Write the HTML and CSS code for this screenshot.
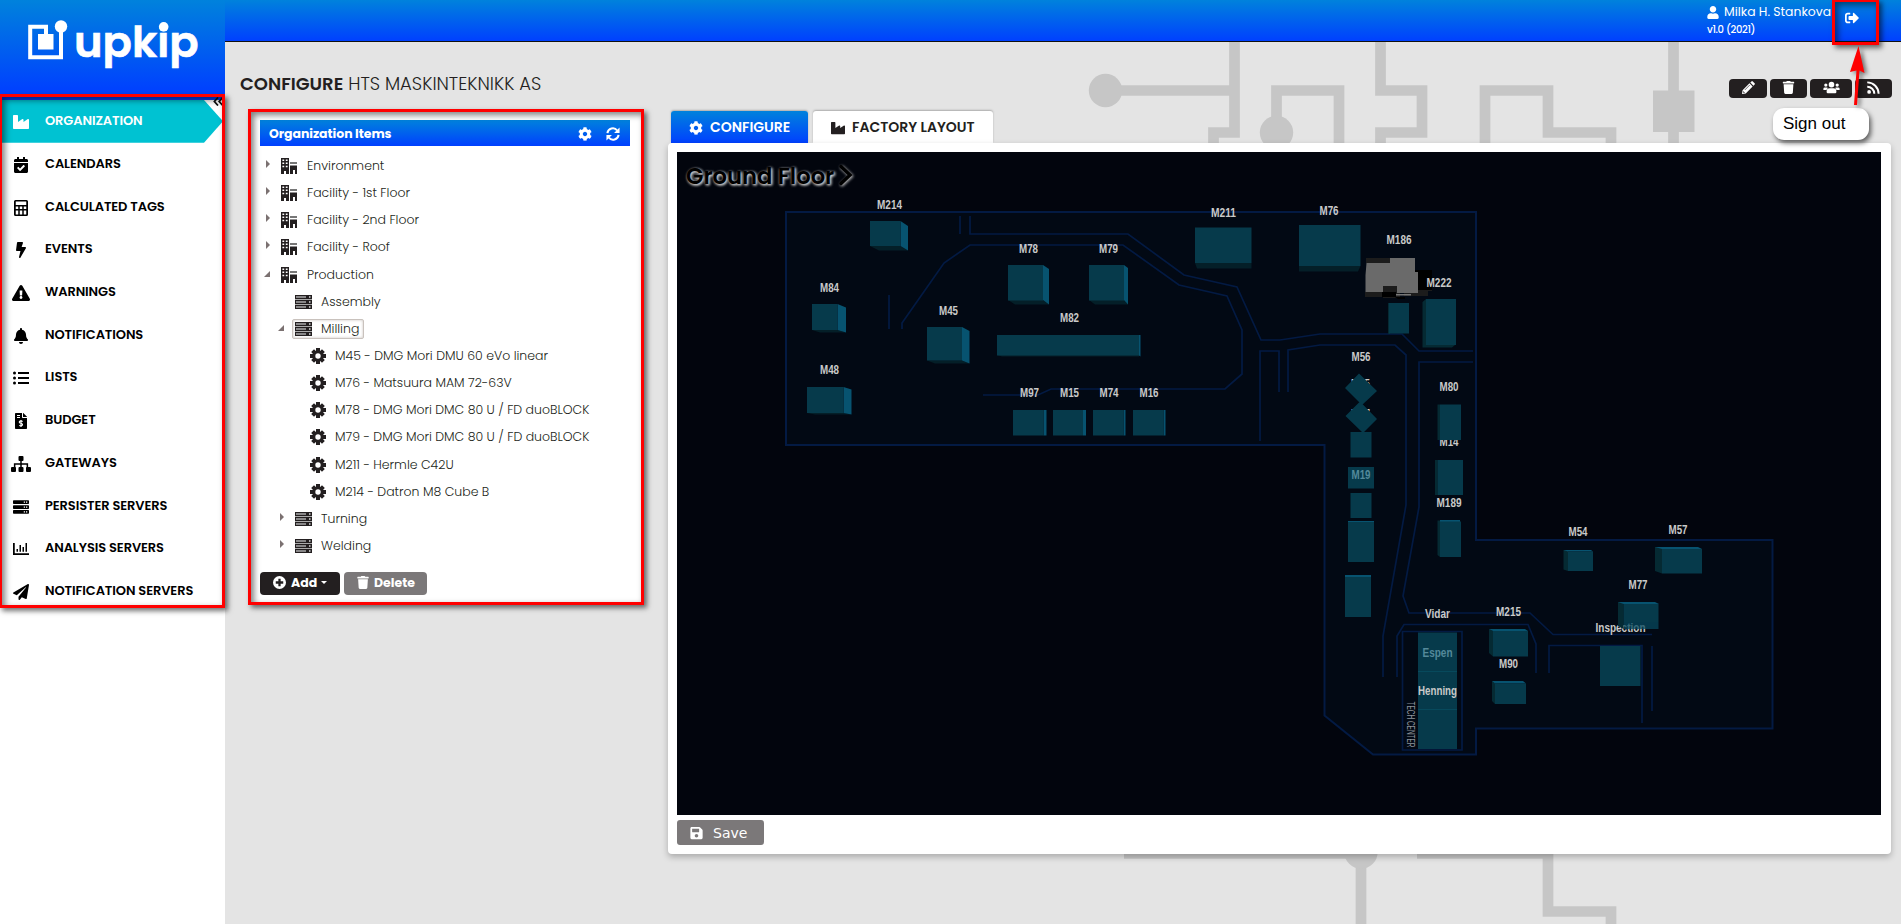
FILE: index.html
```html
<!DOCTYPE html>
<html lang="en">
<head>
<meta charset="utf-8">
<title>upkip - Configure</title>
<link rel="stylesheet" href="styles.css">
</head>
<body>
<svg class="sprite" aria-hidden="true">
  <symbol id="industry" viewBox="0 0 512 512"><path d="M475.115 163.781L336 252.309v-68.28c0-18.916-20.931-30.399-36.885-20.248L160 252.309V56c0-13.255-10.745-24-24-24H24C10.745 32 0 42.745 0 56v400c0 13.255 10.745 24 24 24h464c13.255 0 24-10.745 24-24V184.029c0-18.917-20.931-30.399-36.885-20.248z"/></symbol>
  <symbol id="calendar" viewBox="0 0 448 512"><path d="M436 160H12c-6.627 0-12-5.373-12-12v-36c0-26.51 21.49-48 48-48h48V12c0-6.627 5.373-12 12-12h40c6.627 0 12 5.373 12 12v52h128V12c0-6.627 5.373-12 12-12h40c6.627 0 12 5.373 12 12v52h48c26.51 0 48 21.49 48 48v36c0 6.627-5.373 12-12 12zM12 192h424c6.627 0 12 5.373 12 12v260c0 26.51-21.49 48-48 48H48c-26.51 0-48-21.49-48-48V204c0-6.627 5.373-12 12-12zm333.296 95.947l-28.169-28.398c-4.667-4.705-12.265-4.736-16.97-.068L194.12 364.665l-45.98-46.352c-4.667-4.705-12.266-4.736-16.971-.068l-28.397 28.17c-4.705 4.667-4.736 12.265-.068 16.97l82.601 83.269c4.667 4.705 12.265 4.736 16.97.068l142.953-141.805c4.705-4.667 4.736-12.265.068-16.97z"/></symbol>
  <symbol id="calculator" viewBox="0 0 448 512"><path fill-rule="evenodd" d="M48 0H400Q448 0 448 48V464Q448 512 400 512H48Q0 512 0 464V48Q0 0 48 0ZM56 48V160H392V48ZM56 208V288H136V208ZM184 208V288H264V208ZM312 208V288H392V208ZM56 336V464H136V336ZM184 336V464H264V336ZM312 336V464H392V336Z"/></symbol>
  <symbol id="bolt" viewBox="0 0 320 512"><path d="M296 160H180.6l42.6-129.8C227.2 15 215.7 0 200 0H56C44 0 33.8 8.9 32.2 20.8l-32 240C-1.7 275.2 9.5 288 24 288h118.7L96.6 482.5c-3.6 15.2 8 29.5 23.3 29.5 8.4 0 16.4-4.4 20.8-12l176-304c9.3-15.9-2.2-36-20.7-36z"/></symbol>
  <symbol id="warning" viewBox="0 0 576 512"><path d="M569.517 440.013C587.975 472.007 564.806 512 527.94 512H48.054c-36.937 0-59.999-40.055-41.577-71.987L246.423 23.985c18.467-32.009 64.72-31.951 83.154 0l239.94 416.028zM288 354c-25.405 0-46 20.595-46 46s20.595 46 46 46 46-20.595 46-46-20.595-46-46-46zm-43.673-165.346l7.418 136c.347 6.364 5.609 11.346 11.982 11.346h48.546c6.373 0 11.635-4.982 11.982-11.346l7.418-136c.375-6.874-5.098-12.654-11.982-12.654h-63.383c-6.884 0-12.356 5.78-11.981 12.654z"/></symbol>
  <symbol id="bell" viewBox="0 0 448 512"><path d="M224 512c35.32 0 63.97-28.65 63.97-64H160.03c0 35.35 28.65 64 63.97 64zm215.39-149.71c-19.32-20.76-55.47-51.99-55.47-154.29 0-77.7-54.48-139.9-127.94-155.16V32c0-17.67-14.32-32-31.98-32s-31.98 14.33-31.98 32v20.84C118.56 68.1 64.08 130.3 64.08 208c0 102.3-36.15 133.53-55.47 154.29-6 6.45-8.66 14.16-8.61 21.71.11 16.4 12.98 32 32.1 32h383.8c19.12 0 32-15.6 32.1-32 .05-7.55-2.61-15.27-8.61-21.71z"/></symbol>
  <symbol id="list" viewBox="0 0 512 512"><circle cx="48" cy="96" r="48"/><circle cx="48" cy="256" r="48"/><circle cx="48" cy="416" r="48"/><path d="M160 64H512V128H160ZM160 224H512V288H160ZM160 384H512V448H160Z"/></symbol>
  <symbol id="budget" viewBox="0 0 384 512"><path fill-rule="evenodd" d="M24 0H224V136Q224 160 248 160H384V488Q384 512 360 512H24Q0 512 0 488V24Q0 0 24 0ZM64 64V96H160V64ZM64 128V160H160V128Z"/><path d="M256 0H264L384 122V128H256Z"/><path d="M244 270Q192 240 152 262Q120 300 160 320L220 340Q260 372 224 402Q180 425 136 396M192 220V450" fill="none" stroke="#fff" stroke-width="36"/></symbol>
  <symbol id="sitemap" viewBox="0 0 640 512"><path d="M272 0H368Q400 0 400 32V128Q400 160 368 160H344V232H548V352H608Q640 352 640 384V480Q640 512 608 512H512Q480 512 480 480V384Q480 352 500 352V280H344V352H368Q400 352 400 384V480Q400 512 368 512H272Q240 512 240 480V384Q240 352 272 352H296V280H140V352Q160 352 160 384V480Q160 512 128 512H32Q0 512 0 480V384Q0 352 32 352H92V232H296V160H272Q240 160 240 128V32Q240 0 272 0Z"/></symbol>
  <symbol id="server" viewBox="0 0 512 512"><path fill-rule="evenodd" d="M24 40H488Q512 40 512 64V136Q512 160 488 160H24Q0 160 0 136V64Q0 40 24 40ZM344 80V120H384V80ZM416 80V120H456V80ZM24 196H488Q512 196 512 220V292Q512 316 488 316H24Q0 316 0 292V220Q0 196 24 196ZM344 236V276H384V236ZM416 236V276H456V236ZM24 352H488Q512 352 512 376V448Q512 472 488 472H24Q0 472 0 448V376Q0 352 24 352ZM344 392V432H384V392ZM416 392V432H456V392Z"/></symbol>
  <symbol id="chart" viewBox="0 0 512 512"><path d="M0 64H56V392H512V448H0ZM112 256H160V344H112ZM208 128H256V344H208ZM304 192H352V344H304ZM400 64H448V344H400Z"/></symbol>
  <symbol id="plane" viewBox="0 0 512 512"><path d="M476 3.2L12.5 270.6c-18.1 10.4-15.8 35.6 2.2 43.2L121 358.4l287.3-253.2c5.5-4.9 13.3 2.6 8.6 8.3L176 407v80.5c0 23.6 28.5 32.9 42.5 15.8L282 426l124.6 52.2c14.2 6 30.4-2.9 33-18.2l72-432C515 7.8 493.3-6.8 476 3.2z"/></symbol>
  <symbol id="cog" viewBox="0 0 512 512"><path d="M487.4 315.7l-42.6-24.6c4.3-23.2 4.3-47 0-70.2l42.6-24.6c4.9-2.8 7.1-8.6 5.5-14-11.1-35.6-30-67.8-54.7-94.6-3.8-4.1-10-5.1-14.8-2.3L380.8 110c-17.9-15.4-38.5-27.3-60.8-35.1V25.8c0-5.6-3.9-10.5-9.4-11.7-36.7-8.2-74.3-7.8-109.2 0-5.5 1.2-9.4 6.1-9.4 11.7V75c-22.2 7.9-42.8 19.8-60.8 35.1L88.7 85.5c-4.9-2.8-11-1.9-14.8 2.3-24.7 26.7-43.6 58.9-54.7 94.6-1.7 5.4.6 11.2 5.5 14L67.3 221c-4.3 23.2-4.3 47 0 70.2l-42.6 24.6c-4.9 2.8-7.1 8.6-5.5 14 11.1 35.6 30 67.8 54.7 94.6 3.8 4.1 10 5.1 14.8 2.3l42.6-24.6c17.9 15.4 38.5 27.3 60.8 35.1v49.2c0 5.6 3.9 10.5 9.4 11.7 36.7 8.2 74.3 7.8 109.2 0 5.5-1.2 9.4-6.1 9.4-11.7v-49.2c22.2-7.9 42.8-19.8 60.8-35.1l42.6 24.6c4.9 2.8 11 1.9 14.8-2.3 24.7-26.7 43.6-58.9 54.7-94.6 1.5-5.5-.7-11.3-5.6-14.1zM256 336c-44.1 0-80-35.9-80-80s35.9-80 80-80 80 35.9 80 80-35.9 80-80 80z"/></symbol>
  <symbol id="gear" viewBox="0 0 16 16"><g stroke="currentColor" stroke-width="4"><path d="M8 0V16M0 8H16M2.6 2.6L13.4 13.4M13.4 2.6L2.6 13.4"/></g><circle cx="8" cy="8" r="5.8"/><circle cx="8" cy="8" r="2.7" fill="#fff"/></symbol>
  <symbol id="sync" viewBox="0 0 16 16"><g fill="none" stroke="currentColor" stroke-width="2.3"><path d="M1.600 7A6.300 6.300 0 0 1 12.800 4M14.400 9A6.300 6.300 0 0 1 3.200 12"/></g><path d="M15.500 .5V6.800H9.200ZM.5 15.500V9.200H6.800Z"/></symbol>
  <symbol id="user" viewBox="0 0 448 512"><path d="M224 256c70.7 0 128-57.3 128-128S294.7 0 224 0 96 57.3 96 128s57.3 128 128 128zm89.6 32h-16.7c-22.2 10.2-46.9 16-72.9 16s-50.6-5.8-72.9-16h-16.7C60.2 288 0 348.2 0 422.4V464c0 26.5 21.5 48 48 48h352c26.5 0 48-21.5 48-48v-41.6c0-74.2-60.2-134.4-134.4-134.4z"/></symbol>
  <symbol id="signout" viewBox="0 0 512 512"><path d="M497 273L329 441c-15 15-41 4.5-41-17v-96H152c-13.3 0-24-10.7-24-24v-96c0-13.3 10.7-24 24-24h136V88c0-21.4 25.9-32 41-17l168 168c9.3 9.4 9.3 24.6 0 34zM192 436v-40c0-6.6-5.4-12-12-12H96c-17.7 0-32-14.3-32-32V160c0-17.7 14.3-32 32-32h84c6.6 0 12-5.4 12-12V76c0-6.6-5.4-12-12-12H96c-53 0-96 43-96 96v192c0 53 43 96 96 96h84c6.6 0 12-5.4 12-12z"/></symbol>
  <symbol id="pencil" viewBox="0 0 16 16"><path d="M9.2 2.9L13.1 6.8 4.6 15.3.4 16 0 15.6.7 11.4ZM10.2 1.9L11.6.5Q12.4-.2 13.3.5L15.5 2.7Q16.3 3.6 15.5 4.4L14.1 5.8Z"/><path d="M3.5 11L9.6 4.9M1.8 12.6V14.2H3.4" fill="none" stroke="#231f20" stroke-width=".8"/></symbol>
  <symbol id="trash" viewBox="0 0 448 512"><path d="M432 32H312l-9.4-18.7A24 24 0 0 0 281.1 0H166.8a23.72 23.72 0 0 0-21.4 13.3L136 32H16A16 16 0 0 0 0 48v32a16 16 0 0 0 16 16h416a16 16 0 0 0 16-16V48a16 16 0 0 0-16-16zM53.2 467a48 48 0 0 0 47.9 45h245.8a48 48 0 0 0 47.9-45L416 128H32z"/></symbol>
  <symbol id="users" viewBox="0 0 640 512"><circle cx="96" cy="160" r="64"/><circle cx="544" cy="160" r="64"/><circle cx="320" cy="144" r="110"/><path d="M0 352V304Q0 256 60 256H130Q165 256 185 280Q130 310 128 352ZM640 352V304Q640 256 580 256H510Q475 256 455 280Q510 310 512 352ZM128 432V404Q128 288 244 288H396Q512 288 512 404V432Q512 480 464 480H176Q128 480 128 432Z"/></symbol>
  <symbol id="rss" viewBox="0 0 16 16"><circle cx="2.6" cy="13.4" r="2.3"/><path d="M.3 7A8.7 8.7 0 0 1 9 15.7M.3 1.7A14 14 0 0 1 14.3 15.7" fill="none" stroke="currentColor" stroke-width="2.4"/></symbol>
  <symbol id="save" viewBox="0 0 448 512"><path d="M433.941 129.941l-83.882-83.882A48 48 0 0 0 316.118 32H48C21.49 32 0 53.49 0 80v352c0 26.51 21.49 48 48 48h352c26.51 0 48-21.49 48-48V163.882a48 48 0 0 0-14.059-33.941zM224 416c-35.346 0-64-28.654-64-64 0-35.346 28.654-64 64-64s64 28.654 64 64c0 35.346-28.654 64-64 64zm96-304.52V212c0 6.627-5.373 12-12 12H76c-6.627 0-12-5.373-12-12V108c0-6.627 5.373-12 12-12h228.52c3.183 0 6.235 1.264 8.485 3.515l3.48 3.48A11.996 11.996 0 0 1 320 111.48z"/></symbol>
  <symbol id="plus" viewBox="0 0 16 16"><path fill-rule="evenodd" d="M8 0A8 8 0 1 1 8 16A8 8 0 1 1 8 0ZM6.6 3.4V6.6H3.4V9.4H6.6V12.6H9.4V9.4H12.6V6.6H9.4V3.4Z"/></symbol>
  <symbol id="building" viewBox="0 0 16 16"><path fill-rule="evenodd" d="M0 0H8V16H5V13H3V16H0ZM1.4 1.5V3H3.2V1.5ZM4.8 1.5V3H6.6V1.5ZM1.4 4.6V6.1H3.2V4.6ZM4.8 4.6V6.1H6.6V4.6ZM1.4 7.7V9.2H3.2V7.7ZM4.8 7.7V9.2H6.6V7.7ZM9 7.5H16V16H14V12H12V16H9Z"/><path d="M9 4H16V6H9Z" fill="#777"/></symbol>
  <symbol id="rack" viewBox="0 0 17 14"><path d="M0 0H17V4H0ZM0 5H17V9H0ZM0 10H17V14H0Z"/><path d="M1 1.2H11V2.8H1ZM1 6.2H11V7.8H1ZM1 11.2H11V12.8H1Z" fill="#aaa"/><path d="M0 4H17V5H0ZM0 9H17V10H0Z" fill="#aaa"/><path d="M14 1.3H15.5V2.7H14ZM14 6.3H15.5V7.7H14ZM14 11.3H15.5V12.7H14Z" fill="#ddd"/></symbol>
</svg>

<div class="app">
  <aside class="sidebar">
    <div class="brand">
      <svg class="logo" viewBox="0 0 225 94">
        <path d="M61 30V57.2H30.2V26.8H46V36" fill="none" stroke="#fff" stroke-width="4"/>
        <path d="M38 34H53.5V49.5H38Z" fill="#fff"/><circle cx="61" cy="26.5" r="6.2" fill="#fff"/>
        <text class="wordmark" x="74" y="57" textLength="124.5" lengthAdjust="spacingAndGlyphs">upkip</text>
        <circle cx="163.7" cy="26.8" r="4.8" fill="#fff"/>
      </svg>
    </div>
    <nav class="nav">
      <a class="nav-item active"><span class="nav-icon"><svg><use href="#industry"/></svg></span><span>ORGANIZATION</span></a>
      <a class="nav-item"><span class="nav-icon"><svg><use href="#calendar"/></svg></span><span>CALENDARS</span></a>
      <a class="nav-item"><span class="nav-icon"><svg><use href="#calculator"/></svg></span><span>CALCULATED TAGS</span></a>
      <a class="nav-item"><span class="nav-icon"><svg><use href="#bolt"/></svg></span><span>EVENTS</span></a>
      <a class="nav-item"><span class="nav-icon"><svg><use href="#warning"/></svg></span><span>WARNINGS</span></a>
      <a class="nav-item"><span class="nav-icon"><svg><use href="#bell"/></svg></span><span>NOTIFICATIONS</span></a>
      <a class="nav-item"><span class="nav-icon"><svg><use href="#list"/></svg></span><span>LISTS</span></a>
      <a class="nav-item"><span class="nav-icon"><svg><use href="#budget"/></svg></span><span>BUDGET</span></a>
      <a class="nav-item"><span class="nav-icon"><svg><use href="#sitemap"/></svg></span><span>GATEWAYS</span></a>
      <a class="nav-item"><span class="nav-icon"><svg><use href="#server"/></svg></span><span>PERSISTER SERVERS</span></a>
      <a class="nav-item"><span class="nav-icon"><svg><use href="#chart"/></svg></span><span>ANALYSIS SERVERS</span></a>
      <a class="nav-item"><span class="nav-icon"><svg><use href="#plane"/></svg></span><span>NOTIFICATION SERVERS</span></a>
    </nav>
    <svg class="collapse" viewBox="0 0 11 9"><path d="M5 .5L1.4 4.5 5 8.5M9.8 .5L6.2 4.5 9.8 8.5" fill="none" stroke="#111" stroke-width="1.8"/></svg>
  </aside>

  <main class="main">
    <svg class="circuit" viewBox="225 0 1676 924">
      <g fill="none" stroke="#c6c6c6" stroke-width="10.7">
        <path d="M1105 90.5H1234.5M1234.5 41V132.5H1213.5V160M1276.5 132V90.5H1339V160M1380.5 41V90.5H1422V132.5H1380.5V160M1485 160V90.5H1548V132.5H1611V160M1673.5 41V160"/>
        <path d="M1124 853.5H1361M1361 850V924M1417 853.5H1548V911.5H1611V924"/>
      </g>
      <g fill="#c6c6c6"><circle cx="1105.5" cy="90.5" r="16.7"/><circle cx="1276.5" cy="132.5" r="16.7"/><circle cx="1361" cy="852" r="16.7"/><path d="M1653 90.5H1694.5V132H1653Z"/></g>
    </svg>
    <header class="topbar">
      <div class="account">
        <div class="account-name"><svg><use href="#user"/></svg><span>Milka H. Stankova</span></div>
        <div class="version">v1.0 (2021)</div>
      </div>
      <svg class="signout-icon"><use href="#signout"/></svg>
    </header>
    <div class="title-row">
      <h1 class="title"><b>CONFIGURE</b> <span>HTS MASKINTEKNIKK AS</span></h1>
      <div class="tools">
        <button class="tool t1"><svg><use href="#pencil"/></svg></button>
        <button class="tool t2"><svg><use href="#trash"/></svg></button>
        <button class="tool t3"><svg><use href="#users"/></svg></button>
        <button class="tool t4"><svg><use href="#rss"/></svg></button>
      </div>
    </div>
    <div class="columns">
      <section class="tree-card">
        <div class="tree-head"><span>Organization Items</span><svg><use href="#cog"/></svg><svg><use href="#sync"/></svg></div>
        <ul class="tree">
          <li class="node"><i class="closed"></i><svg><use href="#building"/></svg><span>Environment</span></li>
          <li class="node"><i class="closed"></i><svg><use href="#building"/></svg><span>Facility - 1st Floor</span></li>
          <li class="node"><i class="closed"></i><svg><use href="#building"/></svg><span>Facility - 2nd Floor</span></li>
          <li class="node"><i class="closed"></i><svg><use href="#building"/></svg><span>Facility - Roof</span></li>
          <li class="node"><i class="open"></i><svg><use href="#building"/></svg><span>Production</span></li>
          <li class="node sub"><i></i><svg class="rack"><use href="#rack"/></svg><span>Assembly</span></li>
          <li class="node sub"><i class="open"></i><div class="selected"><svg class="rack"><use href="#rack"/></svg><span>Milling</span></div></li>
          <li class="node leaf"><svg><use href="#gear"/></svg><span>M45 - DMG Mori DMU 60 eVo linear</span></li>
          <li class="node leaf"><svg><use href="#gear"/></svg><span>M76 - Matsuura MAM 72-63V</span></li>
          <li class="node leaf"><svg><use href="#gear"/></svg><span>M78 - DMG Mori DMC 80 U / FD duoBLOCK</span></li>
          <li class="node leaf"><svg><use href="#gear"/></svg><span>M79 - DMG Mori DMC 80 U / FD duoBLOCK</span></li>
          <li class="node leaf"><svg><use href="#gear"/></svg><span>M211 - Hermle C42U</span></li>
          <li class="node leaf"><svg><use href="#gear"/></svg><span>M214 - Datron M8 Cube B</span></li>
          <li class="node sub"><i class="closed"></i><svg class="rack"><use href="#rack"/></svg><span>Turning</span></li>
          <li class="node sub"><i class="closed"></i><svg class="rack"><use href="#rack"/></svg><span>Welding</span></li>
        </ul>
        <div class="tree-actions">
          <button class="btn add"><svg><use href="#plus"/></svg><span>Add</span><i class="caret"></i></button>
          <button class="btn delete"><svg><use href="#trash"/></svg><span>Delete</span></button>
        </div>
      </section>

      <section class="workspace">
        <div class="tabs">
          <div class="tab tab-on"><svg><use href="#cog"/></svg><span>CONFIGURE</span></div>
          <div class="tab tab-off"><svg><use href="#industry"/></svg><span>FACTORY LAYOUT</span></div>
        </div>
        <div class="panel">
          <div class="floor">
            <svg class="map" viewBox="677 152 1204 662">
              <path d="M786 212H1476V540H1772.5V728.5H1476V754.5H1373L1324.5 715.5V445H786Z" fill="#020914" stroke="#031a43" stroke-width="2"/>
              <g fill="none" stroke="#031a43" stroke-width="1.7">
                <path d="M960 216V234M970 216V234H1128L1184 275 1237 287 1261 340H1280L1320 334H1402L1419 351H1473"/>
                <path d="M983 395H1038L1051 389H1225L1242 374V330L1227 296 1179 285 1123 245H970L944 263 902 323V329M889 295V329"/>
                <path d="M1260 441V351H1279V392M1288 392V350L1320 345H1395L1406 355V505L1383 636V677"/>
                <path d="M1473 362H1419V507L1403 596 1409 613H1530L1553 634.5H1652M1397 677V636L1404 624.5H1528L1536 644V673M1549 673V645.5H1642V723M1652 646V711M1402.5 631.5H1462V750H1402.5Z"/>
              </g>
              <g class="label">
                <text x="1360.500" y="388" textLength="19" lengthAdjust="spacingAndGlyphs">M55</text>
                <text x="1360.500" y="418" textLength="19" lengthAdjust="spacingAndGlyphs">M47</text>
                <text x="1449" y="446" textLength="19" lengthAdjust="spacingAndGlyphs">M14</text>
                <text x="1620.5" y="632" textLength="50" lengthAdjust="spacingAndGlyphs">Inspection</text>
              </g>
              <g fill="#041f28">
                <path d="M870 246H900.5L908 250.5H879ZM812 330H837.5L846 332.5H820ZM927 360.5H962L969.5 363.5H935ZM807 413H843.5L851 414.5H815ZM1008 300H1043L1049 304.5H1015ZM1089 300H1125L1128 304.5H1095ZM997 355H1139V356.5H1002ZM1195 263H1251.5V268.5H1197ZM1299 266H1360.5L1358 271.5H1299Z"/>
              </g>
              <g fill="#052a33">
                <path d="M1422.500 302L1426 299V345H1455L1452 347.500H1422.500ZM1437.500 404.500H1440V440H1437.500ZM1435 460H1437.500V495H1435ZM1437.500 520.500H1440V557L1437.500 555ZM1563.500 550H1568V571L1563.500 569.500ZM1655 547H1662V573.500L1655 571ZM1618 602H1623.500V629L1618 626ZM1489 629L1493 631V656.500L1489 653ZM1492 681L1495 683V704L1492 701ZM1388 303H1390V334H1388Z"/>
              </g>
              <g fill="#075370">
                <path d="M900.5 221L908 226V250.500L900.500 246ZM837.500 304L846 307.500V332.500L837.500 330ZM962 327L969.500 331V363.500L962 360.500ZM843.500 387L851.500 389.500V414.500L843.500 413ZM1043 265L1049 269V304.500L1043 300ZM1124 265L1128 268V304.500L1124 300ZM1139 335H1140.500V356.500L1139 355.500ZM1043.500 410H1046.500V435.500H1043.500ZM1083 410H1086V435.500H1083ZM1123.500 410H1125.500V435.500H1123.500ZM1163.500 410H1165.500V435.500H1163.500Z"/>
                <path d="M1563.500 550H1591L1593 551.500H1568ZM1655 547H1698L1702 549H1662ZM1618 602H1655L1659 604H1623.500ZM1489 629H1525L1528 631H1493ZM1492 681H1523L1526 683.500H1495ZM1345 575H1371V577H1345ZM1348 521H1374V522.500H1348ZM1440 520H1460V522H1440Z"/>
              </g>
              <g fill="#063a4b">
                <path d="M870 221H900.500V246H870ZM812 304H837.500V330H812ZM927 327H962V360.500H927ZM807 387H843.500V413H807ZM1008 265H1043V300.500H1008ZM1089 265H1124V300.500H1089ZM997 335H1139V355.500H997ZM1195 227.500H1251.500V263H1195ZM1299 225H1360.500V266H1299ZM1013 410H1043.500V435.500H1013ZM1053 410H1083V435.500H1053ZM1093 410H1123.500V435.500H1093ZM1133 410H1163.500V435.500H1133Z"/>
                <path d="M1426 299H1456V345H1426ZM1389 303H1409V333.500H1389ZM1440 404.500H1461V440H1440ZM1437.500 460H1463V495H1437.500ZM1440 521.500H1461V557H1440ZM1359 373.500L1377 391 1362 405 1345 388ZM1360 401.500L1377 419 1363 433 1345.500 416ZM1350.500 432H1371.500V457.500H1350.500ZM1348 467H1374V488.500H1348ZM1350.500 493H1371.500V518H1350.500ZM1348 522H1374V562H1348ZM1345 577H1371V617H1345Z"/>
                <path d="M1568 551.500H1593V571H1568ZM1662 549H1702V573.500H1662ZM1493 631H1528V656.500H1493ZM1495 683.500H1526V704H1495ZM1600 646H1640.500V686H1600ZM1418 632.500H1457V749H1418Z"/>
                <path d="M1623.500 604H1658.500V622H1623.500Z"/>
              </g>
              <path d="M1623.500 622H1658.500V629H1623.500Z" fill="#07485d" fill-opacity=".75"/>
              <path d="M1418 671.500H1457M1418 709.500H1457" stroke="#07495c"/>
              <path d="M1366 258H1390V263H1366ZM1415 270H1432V291H1415ZM1404 290H1428V296H1404ZM1383 284H1400V298H1383ZM1365 292H1392V297H1365Z" fill="#1c1c1c"/>
              <path d="M1390 258H1415V272H1418V293H1397V286H1383V292H1365.500V275L1366.500 263H1390Z" fill="#6a6a6a"/>
              <path d="M1415 270H1432V290H1418V272H1415ZM1382 292H1396V297H1405V299H1398L1395 297H1382Z" fill="#000"/>
              <path d="M1396 294H1411V295.500H1396Z" fill="#777"/>
              <g class="label">
                <text x="889.500" y="209" textLength="25" lengthAdjust="spacingAndGlyphs">M214</text>
                <text x="829.500" y="291.500" textLength="19" lengthAdjust="spacingAndGlyphs">M84</text>
                <text x="829.500" y="374" textLength="19" lengthAdjust="spacingAndGlyphs">M48</text>
                <text x="948.500" y="315" textLength="19" lengthAdjust="spacingAndGlyphs">M45</text>
                <text x="1028.500" y="253" textLength="19" lengthAdjust="spacingAndGlyphs">M78</text>
                <text x="1108.500" y="253" textLength="19" lengthAdjust="spacingAndGlyphs">M79</text>
                <text x="1069.500" y="322" textLength="19" lengthAdjust="spacingAndGlyphs">M82</text>
                <text x="1029.500" y="396.500" textLength="19" lengthAdjust="spacingAndGlyphs">M97</text>
                <text x="1069.500" y="396.500" textLength="19" lengthAdjust="spacingAndGlyphs">M15</text>
                <text x="1109" y="396.500" textLength="19" lengthAdjust="spacingAndGlyphs">M74</text>
                <text x="1149" y="396.500" textLength="19" lengthAdjust="spacingAndGlyphs">M16</text>
                <text x="1223.500" y="217" textLength="25" lengthAdjust="spacingAndGlyphs">M211</text>
                <text x="1329" y="214.500" textLength="19" lengthAdjust="spacingAndGlyphs">M76</text>
                <text x="1399" y="243.500" textLength="25" lengthAdjust="spacingAndGlyphs">M186</text>
                <text x="1439" y="286.500" textLength="25" lengthAdjust="spacingAndGlyphs">M222</text>
                <text x="1361" y="360.500" textLength="19" lengthAdjust="spacingAndGlyphs">M56</text>
                <text x="1449" y="391" textLength="19" lengthAdjust="spacingAndGlyphs">M80</text>
                <text x="1449" y="507" textLength="25" lengthAdjust="spacingAndGlyphs">M189</text>
                <text x="1361" y="479" textLength="19" lengthAdjust="spacingAndGlyphs" class="dim">M19</text>
                <text x="1578" y="536" textLength="19" lengthAdjust="spacingAndGlyphs">M54</text>
                <text x="1678" y="533.500" textLength="19" lengthAdjust="spacingAndGlyphs">M57</text>
                <text x="1638" y="588.500" textLength="19" lengthAdjust="spacingAndGlyphs">M77</text>
                <text x="1437.500" y="618" textLength="25" lengthAdjust="spacingAndGlyphs">Vidar</text>
                <text x="1508.500" y="616" textLength="25" lengthAdjust="spacingAndGlyphs">M215</text>
                <text x="1508.500" y="668" textLength="19" lengthAdjust="spacingAndGlyphs">M90</text>
                <text x="1437.500" y="656.500" textLength="30" lengthAdjust="spacingAndGlyphs" class="dim">Espen</text>
                <text x="1437.500" y="695" textLength="39" lengthAdjust="spacingAndGlyphs">Henning</text>
                <text class="tech" transform="translate(1406.500 724.500) rotate(90)" textLength="46" lengthAdjust="spacingAndGlyphs">TECH CENTER</text>
              </g>
            </svg>
            <div class="crumb"><span>Ground Floor</span><svg viewBox="0 0 14 20"><path d="M2 1.500L11 10 2 18.500" fill="none" stroke="#000" stroke-width="3.500" stroke-linecap="round"/></svg></div>
          </div>
          <button class="save"><svg><use href="#save"/></svg><span>Save</span></button>
        </div>
      </section>
    </div>
  </main>
</div>

<div class="mark mark-nav"></div>
<div class="mark mark-tree"></div>
<div class="mark mark-signout"></div>
<div class="tip">Sign out</div>
<svg class="arrow" viewBox="0 0 24 64"><path d="M12.500 1L18.500 28 13.500 25.500 11 60H8L10.500 25.500 4 27Z" fill="#f00"/></svg>
</body>
</html>
```
FILE: styles.css
```css
* { box-sizing: border-box; }
body { margin: 0; width: 1901px; height: 924px; overflow: hidden; font-family: Poppins, Inter, "Open Sans", sans-serif; color: #231f20; background: #e4e4e4; position: relative; }
svg { fill: currentColor; display: block; flex: none; }
button { border: 0; font-family: inherit; padding: 0; color: #fff; }
.sprite { position: absolute; width: 0; height: 0; }
.app { display: flex; height: 924px; }

.sidebar { width: 225px; background: #fff; position: relative; flex: none; }
.brand { height: 100px; background: linear-gradient(#0082dc, #0040ff 92px); }
.logo { width: 225px; height: 94px; }
.wordmark { font-size: 42px; font-weight: 600; fill: #fff; stroke: #fff; stroke-width: .6px; }
.nav { display: flex; flex-direction: column; }
.nav-item { display: flex; align-items: center; height: 42.7px; font-size: 13px; font-weight: 600; color: #000; white-space: nowrap; letter-spacing: -0.1px; }
.nav-icon { width: 41px; display: flex; justify-content: center; margin-right: 4px; padding-top: 2px; }
.nav-icon svg { width: 20px; height: 16px; }
.active { width: 223px; background: #00c2d2; color: #fff; clip-path: polygon(0 0, 204px 0, 100% 50%, 204px 100%, 0 100%); }
.collapse { position: absolute; left: 213px; top: 97px; width: 11px; height: 9px; }

.main { flex: 1; position: relative; min-width: 0; }
.circuit { position: absolute; left: 0; top: 0; width: 1676px; height: 924px; }
.topbar { position: relative; height: 42px; background: linear-gradient(#0082dc, #0040ff); border-bottom: 1px solid #111; display: flex; justify-content: flex-end; padding-right: 42px; color: #fff; }
.account { width: 125px; margin-right: 3px; padding-top: 3px; }
.account-name { display: flex; align-items: center; gap: 5px; font-size: 12.4px; height: 18px; white-space: nowrap; }
.account-name svg { width: 12px; height: 13px; }
.version { font-size: 10px; line-height: 17px; font-weight: 500; letter-spacing: -0.35px; }
.signout-icon { width: 14px; height: 14px; margin: 11px 0 0 10px; }

.title-row { position: relative; display: flex; justify-content: space-between; padding: 30px 9px 0 15px; height: 69px; }
.title { margin: 0; font-size: 18px; line-height: 24px; font-weight: 300; white-space: nowrap; }
.title b { font-weight: 600; }
.tools { display: flex; gap: 3px; padding-top: 7px; }
.tool { height: 19px; border-radius: 4px; background: #231f20; display: flex; justify-content: center; padding-top: 2px; }
.tool svg { width: 17px; height: 13px; }
.t1 { width: 38px; } .t2 { width: 37px; } .t3 { width: 42px; } .t4 { width: 37px; }

.columns { position: relative; display: flex; align-items: flex-start; }
.tree-card { margin-left: 25px; width: 391px; height: 493px; background: #fff; padding: 9px 11px 0 10px; }
.tree-head { height: 26px; background: linear-gradient(#0082dc, #0040ff); color: #fff; display: flex; align-items: center; padding: 2px 10px 0 9px; font-size: 12.5px; font-weight: 700; letter-spacing: -0.05px; }
.tree-head span { flex: 1; }
.tree-head svg { width: 14px; height: 14px; margin-left: 14px; }
.tree { list-style: none; margin: 6.5px 0 0; padding: 0; }
.node { display: flex; align-items: center; height: 27.15px; font-size: 12.5px; font-weight: 300; white-space: nowrap; padding-left: 6px; }
.node i { width: 15px; display: block; }
.closed::before { content: ""; display: block; width: 0; border: 4px solid transparent; border-left-color: #7b7171; border-right: 0; margin-top: -4px; }
.open::before { content: ""; display: block; width: 0; border-left: 6px solid transparent; border-bottom: 6px solid #7b7171; margin: -2px 0 0 -2px; }
.node svg { width: 16px; height: 16px; margin-right: 10px; }
.node svg.rack { width: 17px; height: 14px; margin-right: 9px; }
.sub { padding-left: 20px; }
.leaf { padding-left: 50px; }
.leaf svg { margin-right: 9px; }
.selected { display: flex; align-items: center; height: 20px; margin-left: -3px; padding: 0 4px 0 2px; border: 1px solid #c9c2bd; border-radius: 2px; box-shadow: inset 0 0 3px #c9c2bd; }
.tree-actions { display: flex; gap: 4px; margin-top: 12.5px; }
.btn { height: 23px; border-radius: 4px; display: flex; align-items: center; font-size: 12.5px; font-weight: 700; padding: 0 12px 2px 13px; }
.add { width: 80px; background: #231f20; }
.add svg { width: 13px; height: 13px; margin-right: 5px; }
.caret { border: 3px solid transparent; border-top-color: #fff; border-bottom: 0; margin-left: 4px; }
.delete { width: 83px; background: #7b7879; }
.delete svg { width: 12px; height: 13px; margin-right: 5px; }

.workspace { margin-left: 27px; width: 1223px; }
.tabs { display: flex; align-items: flex-end; height: 32px; gap: 5px; padding-left: 3px; }
.tab { height: 32px; border-radius: 3px 3px 0 0; display: flex; align-items: center; font-size: 14px; font-weight: 600; box-shadow: 0 -1px 2px #aaa; white-space: nowrap; padding-top: 1px; }
.tab svg { width: 14px; height: 14px; margin-right: 7px; }
.tab-on { width: 137px; padding-left: 18px; color: #fff; background: linear-gradient(#0082dc, #0040ff); }
.tab-off { width: 180px; padding-left: 18px; background: #fff; }
.panel { position: relative; height: 711px; background: #fff; padding: 9px; border-radius: 4px; box-shadow: 0 3px 6px rgba(0,0,0,.25); }
.floor { position: relative; width: 1204px; height: 663px; background: #02050d; }
.map { width: 1204px; height: 662px; }
.label { font: bold 12.9px "Liberation Sans Narrow", "Liberation Sans", sans-serif; fill: #c9c9c9; text-anchor: middle; }
.dim { fill: #54899a; }
.tech { font-size: 10px; font-weight: 400; fill: #8c9299; }
.crumb { position: absolute; left: 9px; top: 11px; display: flex; align-items: center; font-size: 22.7px; font-weight: 600; color: #000; text-shadow: 1px 1px 3px #ccc, 1px 1px 3px #ccc; line-height: 26px; }
.crumb svg { width: 14px; height: 20px; margin: -2px 0 0 5px; overflow: visible; filter: drop-shadow(1px 1px 1.5px #ccc); }
.save { margin-top: 5px; width: 87px; height: 25px; border-radius: 3px; background: #7b7879; display: flex; align-items: center; padding-left: 13px; font: 14px "DejaVu Sans", sans-serif; }
.save svg { width: 13px; height: 14px; margin-right: 10px; }

.mark { position: absolute; border: 3px solid #f00; box-shadow: 3px 3px 5px rgba(0,0,0,.55), inset 3px 3px 6px rgba(0,0,0,.5); }
.mark-nav { left: -1px; top: 94px; width: 226px; height: 514px; }
.mark-tree { left: 248px; top: 109px; width: 396px; height: 496px; }
.mark-signout { left: 1832px; top: -1px; width: 47px; height: 46px; }
.tip { position: absolute; left: 1773px; top: 108px; width: 96px; height: 32px; border-radius: 11px; background: #fff; box-shadow: 2px 3px 5px rgba(0,0,0,.6); font: 17px/31px "Liberation Sans", sans-serif; color: #000; padding-left: 10px; }
.arrow { position: absolute; left: 1846px; top: 45px; width: 24px; height: 64px; filter: drop-shadow(3px 2px 2px rgba(0,0,0,.5)); }
```
